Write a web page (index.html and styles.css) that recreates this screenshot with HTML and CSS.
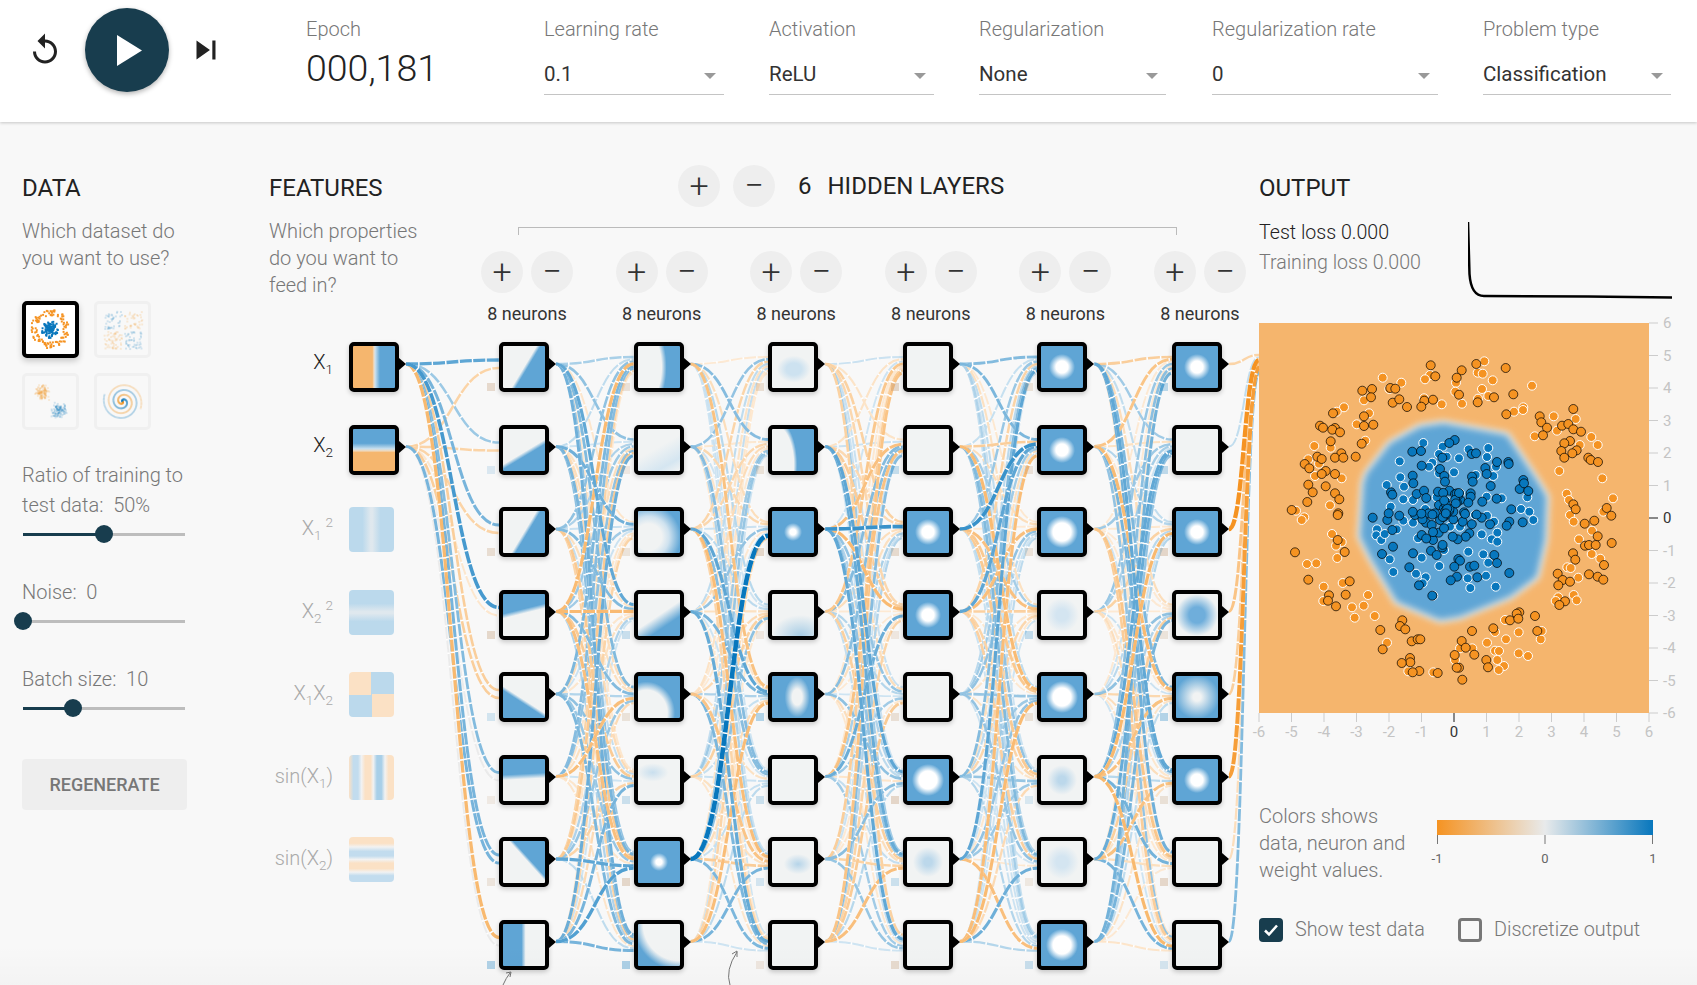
FILE: index.html
```html
<!DOCTYPE html>
<html lang="en">
<head>
    <meta charset="UTF-8">
    <meta name="viewport" content="width=device-width, initial-scale=1.0">
    <title>Tensorflow Playground</title>
    <link rel="stylesheet" href="styles.css">
</head>
<body>
    <svg id="links" class="links" width="1697" height="985"></svg>

    <header class="top">
        <svg class="icon-reset" width="36" height="36" viewBox="0 0 24 24"><path d="M12 5V1L7 6l5 5V7c3.31 0 6 2.69 6 6s-2.69 6-6 6-6-2.69-6-6H4c0 4.42 3.58 8 8 8s8-3.58 8-8-3.58-8-8-8z"/></svg>
        <div class="play"><svg width="25" height="31" viewBox="0 0 25 31"><polygon points="0,0 25,15.5 0,31"/></svg></div>
        <svg class="icon-next" width="38" height="38" viewBox="0 0 24 24"><path d="M6 18l8.5-6L6 6v12zM16 6v12h2V6h-2z"/></svg>
        <div class="epoch">
            <div class="label">Epoch</div>
            <div class="epoch-num">000,181</div>
        </div>
        <div class="drop w-rate"><div class="label">Learning rate</div><div class="select">0.1</div></div>
        <div class="drop w-act"><div class="label">Activation</div><div class="select">ReLU</div></div>
        <div class="drop w-reg"><div class="label">Regularization</div><div class="select">None</div></div>
        <div class="drop w-regrate"><div class="label">Regularization rate</div><div class="select">0</div></div>
        <div class="drop w-type"><div class="label">Problem type</div><div class="select">Classification</div></div>
    </header>

    <main class="main">
        <section class="col-data">
            <h4>DATA</h4>
            <p class="hint">Which dataset do you want to use?</p>
            <div class="thumbs">
                <svg id="set-circle" class="thumb selected" viewBox="0 0 51 51"></svg>
                <svg id="set-xor" class="thumb" viewBox="0 0 51 51"></svg>
                <svg id="set-gauss" class="thumb" viewBox="0 0 51 51"></svg>
                <svg id="set-spiral" class="thumb" viewBox="0 0 51 51"></svg>
            </div>
            <div class="slider-label first">Ratio of training to test data:&nbsp; 50%</div>
            <div class="slider"><div class="fill" style="width: 50%"></div></div>
            <div class="slider-label">Noise:&nbsp; 0</div>
            <div class="slider"><div class="fill" style="width: 0"></div></div>
            <div class="slider-label">Batch size:&nbsp; 10</div>
            <div class="slider"><div class="fill" style="width: 31%"></div></div>
            <button class="regen">REGENERATE</button>
        </section>

        <section class="col-features">
            <h4>FEATURES</h4>
            <p class="hint features-hint">Which properties do you want to feed in?</p>
            <div class="feature active"><span class="feat-name">X<sub>1</sub></span><div class="node f-x1"><i class="arrow"></i></div></div>
            <div class="feature active"><span class="feat-name">X<sub>2</sub></span><div class="node f-x2"><i class="arrow"></i></div></div>
            <div class="feature"><span class="feat-name">X<sub>1</sub><sup>2</sup></span><div class="swatch f-x1sq"></div></div>
            <div class="feature"><span class="feat-name">X<sub>2</sub><sup>2</sup></span><div class="swatch f-x2sq"></div></div>
            <div class="feature"><span class="feat-name">X<sub>1</sub>X<sub>2</sub></span><div class="swatch f-xy"></div></div>
            <div class="feature"><span class="feat-name">sin(X<sub>1</sub>)</span><div class="swatch f-sin1"></div></div>
            <div class="feature"><span class="feat-name">sin(X<sub>2</sub>)</span><div class="swatch f-sin2"></div></div>
        </section>

        <section class="col-net">
            <div class="layers-head">
                <div class="round">+</div>
                <div class="round">&minus;</div>
                <span class="layer-count">6</span>
                <span class="layer-title">HIDDEN LAYERS</span>
            </div>
            <div class="bracket"></div>
            <div id="layers" class="layers"></div>
        </section>

        <section class="col-output">
            <h4>OUTPUT</h4>
            <div class="loss-row">
                <div class="loss">
                    <div class="loss-test">Test loss 0.000</div>
                    <div class="loss-train">Training loss 0.000</div>
                </div>
                <svg class="spark" width="204" height="80"><path d="M0 0 L1.5 52 Q3 74 16 74 L120 74.5 L204 75.5"/></svg>
            </div>
            <svg id="plot" class="plot" width="413" height="422"></svg>
            <div class="legend">
                <p class="hint legend-text">Colors shows data, neuron and weight values.</p>
                <svg class="scale" width="230" height="50">
                    <defs>
                        <linearGradient id="scale-grad">
                            <stop offset="0" stop-color="#f59322"/>
                            <stop offset="0.5" stop-color="#e8eaeb"/>
                            <stop offset="1" stop-color="#0877bd"/>
                        </linearGradient>
                    </defs>
                    <rect width="216" height="15" fill="url(#scale-grad)"/>
                    <path class="scale-tick" d="M.5 15v9M108 15v9M215.5 15v9"/>
                    <text x="0" y="43" text-anchor="middle">-1</text>
                    <text x="108" y="43" text-anchor="middle">0</text>
                    <text x="216" y="43" text-anchor="middle">1</text>
                </svg>
            </div>
            <div class="checks">
                <label class="check first-check"><span class="box on"><svg width="18" height="18" viewBox="0 0 18 18"><path d="M3 9.5l4 4 8-9"/></svg></span>Show test data</label>
                <label class="check"><span class="box"></span>Discretize output</label>
            </div>
        </section>
    </main>

    <script src="app.js"></script>
</body>
</html>
```

FILE: styles.css
```css
*{
    margin: 0;
    padding: 0;
    box-sizing: border-box;
}
html,body{
    height: 985px;
    overflow: hidden;
}
body{
    position: relative;
    background: #f8f8f8;
    font-family: Roboto, "Liberation Sans", sans-serif;
    font-weight: 300;
    font-size: 20px;
    color: #777;
}
body::after{
    content: "";
    position: absolute;
    left: 0;
    right: 0;
    bottom: 0;
    height: 40px;
    background: linear-gradient(to bottom, rgba(0,0,0,0), rgba(0,0,0,.02));
    pointer-events: none;
}
.links{
    position: absolute;
    left: 0;
    top: 0;
}
.links .arrow-hint{
    fill: none;
    stroke: #777;
    stroke-width: 1;
}

/* top bar */
.top{
    position: relative;
    display: flex;
    align-items: flex-start;
    height: 122px;
    padding-left: 27px;
    background: #fff;
    box-shadow: 0 1px 3px rgba(0,0,0,.2);
}
.icon-reset{
    margin-top: 32px;
    fill: #222;
}
.play{
    display: flex;
    align-items: center;
    justify-content: center;
    width: 84px;
    height: 84px;
    margin: 8px 18px 0 22px;
    border-radius: 50%;
    background: #183d4e;
    box-shadow: 0 2px 5px rgba(0,0,0,.3);
}
.play svg{
    margin-left: 4px;
    fill: #fff;
}
.icon-next{
    fill: #222;
    margin: 31px 81px 0 0;
}
.epoch{
    width: 238px;
}
.label{
    height: 20px;
    margin-top: 19px;
    line-height: 20px;
    font-size: 20px;
    color: #777;
}
.epoch-num{
    margin-top: 8px;
    line-height: 42px;
    font-size: 37.5px;
    color: #222;
}
.drop{
    margin-right: 45px;
}
.w-rate{ width: 180px; }
.w-act{ width: 165px; }
.w-reg{ width: 187px; margin-right: 46px; }
.w-regrate{ width: 226px; }
.w-type{ width: 188px; margin-right: 0; }
.select{
    position: relative;
    height: 37px;
    margin-top: 19px;
    padding-top: 5px;
    line-height: 22px;
    font-size: 20.5px;
    font-weight: 400;
    color: #333;
    border-bottom: 1px solid #c4c4c4;
}
.select::after{
    content: "";
    position: absolute;
    right: 8px;
    top: 15px;
    border-left: 6px solid transparent;
    border-right: 6px solid transparent;
    border-top: 6px solid #999;
}

/* page columns */
.main{
    display: flex;
    align-items: flex-start;
    padding: 52px 0 0 22px;
}
h4{
    height: 28px;
    line-height: 28px;
    font-size: 24px;
    font-weight: 400;
    color: #222;
}
.hint{
    margin-top: 16px;
    line-height: 27px;
    font-size: 20px;
    color: #777;
}
.col-data{
    width: 247px;
    flex: none;
}
.col-data .hint{
    width: 165px;
}
.thumbs{
    display: grid;
    grid-template-columns: 57px 57px;
    gap: 15px;
    margin-top: 29px;
}
.thumb{
    width: 57px;
    height: 57px;
    padding: 3px;
    border: 3px solid #f0f0f0;
    border-radius: 5px;
    background: #f8f8f8;
}
.thumb rect{
    opacity: .16;
}
.thumb.selected{
    border: 4px solid #000;
    padding: 2px;
    background: #fff;
    box-shadow: 0 3px 6px rgba(0,0,0,.2);
}
.thumb.selected rect{
    opacity: 1;
}
.slider-label{
    width: 170px;
    margin-top: 41.5px;
    line-height: 30px;
    font-size: 20px;
}
.slider-label.first{
    margin-top: 30px;
}
.slider{
    position: relative;
    width: 162px;
    height: 3px;
    margin: 12.5px 0 0 1px;
    background: #bdbdbd;
}
.fill{
    position: relative;
    height: 3px;
    background: #183d4e;
}
.fill::after{
    content: "";
    position: absolute;
    right: -9px;
    top: -7.5px;
    width: 18px;
    height: 18px;
    border-radius: 50%;
    background: #183d4e;
}
.regen{
    display: block;
    width: 165px;
    height: 51px;
    margin-top: 49.5px;
    border: 0;
    border-radius: 4px;
    background: #eee;
    color: #777;
    font-family: Roboto, "Liberation Sans", sans-serif;
    font-size: 18px;
    font-weight: 500;
}

.col-features{
    position: relative;
    width: 212px;
    flex: none;
}
.features-hint{
    width: 160px;
}
.feature{
    display: flex;
    align-items: flex-start;
    height: 82.5px;
}
.features-hint + .feature{
    margin-top: 43px;
}
.feat-name{
    width: 64px;
    margin-right: 16px;
    padding-top: 9px;
    text-align: right;
    white-space: nowrap;
    font-size: 20px;
    color: #aaa;
}
.feature.active .feat-name{
    padding-top: 8px;
    color: #222;
}
.feat-name sub,.feat-name sup{
    font-size: 13.5px;
    line-height: 0;
}
.feat-name sup{
    margin-left: 4px;
}
.swatch{
    width: 45px;
    height: 45px;
    border-radius: 4px;
}
.f-x1{ background: linear-gradient(90deg, #f5b66e 46%, #eedcc6 50%, #c8dfee 53%, #5fa5d5 64%); }
.f-x2{ background: linear-gradient(0deg, #f5b66e 44%, #f0d9bc 48%, #c8dfee 53%, #5fa5d5 66%); }
.f-x1sq{ background: linear-gradient(90deg, #bbd9ec 30%, #dfe8ee 48%, #dfe8ee 52%, #bbd9ec 70%); }
.f-x2sq{ background: linear-gradient(0deg, #bbd9ec 30%, #dfe8ee 48%, #dfe8ee 52%, #bbd9ec 70%); }
.f-xy{ background: conic-gradient(#bbd9ec 0 25%, #fbe1c5 0 50%, #bbd9ec 0 75%, #fbe1c5 0); }
.f-sin1{ background: linear-gradient(90deg, #fbe1c5 0, #c2dcee 10%, #c2dcee 20%, #f2f2f2 28%, #fbe1c5 36%, #fbe1c5 48%, #f2f2f2 54%, #a8cfe8 62%, #a8cfe8 72%, #f2f2f2 80%, #fbe1c5 88%, #fbe1c5 100%); }
.f-sin2{ background: linear-gradient(180deg, #fbe1c5 0, #fbe1c5 14%, #f2f2f2 22%, #c2dcee 32%, #c2dcee 42%, #f2f2f2 50%, #fbe1c5 58%, #fbe1c5 70%, #f2f2f2 78%, #c2dcee 86%, #c2dcee 100%); }

/* network */
.col-net{
    width: 778px;
    flex: none;
    margin-top: -9px;
}
.layers-head{
    display: flex;
    align-items: center;
    gap: 13px;
    padding-left: 197px;
    font-size: 24px;
    font-weight: 400;
    color: #222;
}
.round{
    width: 42px;
    height: 42px;
    border-radius: 50%;
    background: #eee;
    text-align: center;
    line-height: 41px;
    font-size: 34px;
    font-weight: 300;
    color: #333;
}
.layer-count{
    margin: 0 3px 0 10px;
}
.bracket{
    width: 659px;
    height: 8px;
    margin: 20px 0 0 37px;
    border: 1.5px solid #bbb;
    border-bottom: 0;
}
.layers{
    display: flex;
    margin-top: 16px;
}
.layer{
    position: relative;
    width: 134.6px;
    flex: none;
}
.layer:last-child{
    width: 105px;
}
.layer-btns{
    display: flex;
    gap: 8px;
}
.neurons{
    width: 92px;
    margin-top: 8px;
    line-height: 26px;
    text-align: center;
    white-space: nowrap;
    font-size: 18px;
    font-weight: 400;
    color: #333;
}
.stack{
    display: flex;
    flex-direction: column;
    gap: 32.5px;
    margin: 15px 0 0 18px;
}
.node{
    position: relative;
    flex: none;
    width: 50px;
    height: 50px;
    border: 4px solid #000;
    border-radius: 5px;
    background-color: #f1f3f3;
    box-shadow: 0 2px 5px rgba(0,0,0,.2);
}
.arrow{
    position: absolute;
    left: 46px;
    top: 12px;
    border-top: 6px solid transparent;
    border-bottom: 6px solid transparent;
    border-left: 7px solid #000;
}
.bias{
    position: absolute;
    left: -16px;
    top: 37px;
    width: 8px;
    height: 8px;
}
.d-a{ background-image: linear-gradient(121deg, #f1f3f3 50%, #5fa5d5 56%); }
.d-b{ background-image: linear-gradient(149deg, #f1f3f3 53%, #5fa5d5 60%); }
.d-c{ background-image: linear-gradient(346deg, #f1f3f3 53%, #5fa5d5 62%); }
.d-d{ background-image: linear-gradient(213deg, #f1f3f3 54%, #5fa5d5 60%); }
.d-e{ background-image: linear-gradient(357deg, #f1f3f3 52%, #5fa5d5 64%); }
.d-f{ background-image: linear-gradient(48deg, #f1f3f3 55%, #5fa5d5 60%); }
.d-g{ background-image: linear-gradient(90deg, #5fa5d5 44%, #f1f3f3 54%); }
.c-a{ background-image: radial-gradient(ellipse 60% 115% at 8% 50%, #f1f3f3 80%, #5fa5d5 100%); }
.c-b{ background-image: linear-gradient(150deg, #f1f3f3 45%, #d5e6f1 80%, #f1f3f3 100%); }
.c-c{ background-image: radial-gradient(ellipse 70% 70% at 25% 62%, #f1f3f3 45%, #cfe2ef 70%, #5fa5d5 110%); }
.c-d{ background-image: linear-gradient(146deg, #f1f3f3 50%, #5fa5d5 72%); }
.c-e{ background-image: radial-gradient(ellipse 62% 68% at 20% 88%, #f1f3f3 80%, #5fa5d5 110%); }
.c-f{ background-image: radial-gradient(ellipse 38% 22% at 35% 32%, #c9dfee, #f1f3f3); }
.c-g{ background-image: radial-gradient(circle at 100% 0, #f1f3f3 62%, #5fa5d5 78%); }
.e-a{ background-image: radial-gradient(ellipse 40% 32% at 52% 55%, #cde2f0 45%, #f1f3f3 100%); }
.e-b{ background-image: radial-gradient(ellipse 52% 110% at 8% 85%, #f1f3f3 84%, #5fa5d5 100%); }
.e-c{ background-image: radial-gradient(ellipse 70% 50% at 68% 100%, #a6cce5, #f1f3f3); }
.e-d{ background-image: radial-gradient(ellipse 26% 42% at 60% 50%, #f1f3f3 45%, #5fa5d5 115%); }
.e-e{ background-image: radial-gradient(ellipse 34% 24% at 62% 55%, #b5d4e9, #f1f3f3); }
.hole-s{ background-image: radial-gradient(circle, #fff 3px, #5fa5d5 9px); }
.hole-m{ background-image: radial-gradient(circle, #fff 6px, #5fa5d5 13px); }
.hole-l{ background-image: radial-gradient(circle, #fff 9px, #5fa5d5 16px); }
.hole-xl{ background-image: radial-gradient(circle, #f1f3f3 4px, #5fa5d5 22px); }
.blob-f{ background-image: radial-gradient(circle, #d4e5f1 6px, #f1f3f3 17px); }
.blob-m{ background-image: radial-gradient(circle, #bcd8eb 4px, #f1f3f3 15px); }
.blob-s{ background-image: radial-gradient(circle, #6faedb 8px, #f1f3f3 21px); }

/* output */
.col-output{
    width: 413px;
    flex: none;
}
.loss-row{
    display: flex;
    height: 80px;
    margin: 16px 0 25px;
}
.loss{
    width: 209px;
    line-height: 30px;
    font-size: 19.6px;
}
.loss-test{
    color: #222;
}
.spark{
    margin-top: 4px;
    flex: none;
}
.spark path{
    fill: none;
    stroke: #000;
    stroke-width: 2.5;
}
.plot{
    display: block;
    overflow: visible;
}
.plot text{
    font-size: 15px;
    font-weight: 400;
    fill: #c4c4c4;
}
.plot text.zero{
    fill: #333;
}
.plot .tick{
    stroke: #ccc;
    stroke-width: 1;
}
.plot .tick.zero{
    stroke: #888;
    stroke-width: 2;
}
.legend{
    display: flex;
    height: 80px;
    margin-top: 58px;
}
.legend-text{
    width: 178px;
    margin: 0;
    padding-right: 22px;
}
.scale{
    margin-top: 17px;
    overflow: visible;
}
.scale text{
    font-size: 13px;
    font-weight: 400;
    fill: #666;
}
.scale-tick{
    fill: none;
    stroke: #777;
    stroke-width: 1;
}
.checks{
    display: flex;
    margin-top: 35px;
}
.check{
    display: flex;
    align-items: center;
    gap: 12px;
    font-size: 19.8px;
    line-height: 24px;
    color: #777;
}
.first-check{
    width: 199px;
}
.box{
    display: flex;
    align-items: center;
    justify-content: center;
    width: 24px;
    height: 24px;
    border: 3px solid #777;
    border-radius: 4px;
}
.box.on{
    border: 0;
    background: #183d4e;
}
.box path{
    fill: none;
    stroke: #fff;
    stroke-width: 2.5;
}
```

FILE: app.js
```js
// seeded so every render draws the same network
var seed = 181;
function rnd(){
    seed = (seed * 16807) % 2147483647;
    return seed / 2147483647;
}

var BLUE = "#0877bd";
var ORANGE = "#f59322";
var COL_X = [499, 633.6, 768.2, 902.8, 1037.4, 1172];
var ROW_Y = [342, 424.5, 507, 589.5, 672, 754.5, 837, 919.5];

// heatmap class of every neuron, layer by layer
var NODES = [
    ["d-a","d-b","d-a","d-c","d-d","d-e","d-f","d-g"],
    ["c-a","c-b","c-c","c-d","c-e","c-f","hole-s","c-g"],
    ["e-a","e-b","hole-s","e-c","e-d","","e-e",""],
    ["","","hole-m","hole-m","","hole-l","blob-m",""],
    ["hole-m","hole-m","hole-l","blob-f","hole-l","blob-m","blob-f","hole-l"],
    ["hole-m","","hole-m","blob-s","hole-xl","hole-m","",""]
];

function drawLayers(){
    var html = "";
    for(var c = 0; c < NODES.length; c++){
        html += "<div class='layer'><div class='layer-btns'><div class='round'>+</div><div class='round'>&minus;</div></div>";
        html += "<div class='neurons'>8 neurons</div><div class='stack'>";
        for(var r = 0; r < 8; r++){
            var v = rnd();
            var col = v < 0.6 ? "rgba(190,150,110," + (0.15 + rnd() * 0.2) + ")" : "rgba(8,119,189," + (0.12 + rnd() * 0.2) + ")";
            html += "<div class='node " + NODES[c][r] + "'><i class='arrow'></i><i class='bias' style='background:" + col + "'></i></div>";
        }
        html += "</div></div>";
    }
    document.getElementById("layers").innerHTML = html;
}

// [strength, -1 orange / 1 blue]
var INPUT_W = [
    [[.55,1],[.3,1],[.45,1],[.65,1],[.35,-1],[.4,1],[.45,1],[.55,-1]],
    [[.3,-1],[.3,-1],[.3,-1],[.12,-1],[.35,-1],[.1,0],[.45,1],[.1,0]]
];
var FIXED = {
    "0-6-6": [.55,1], "0-7-6": [.6,1], "0-7-7": [.45,1],
    "1-6-2": [1,1], "1-7-2": [.3,-1],
    "2-2-2": [.7,1], "2-7-7": [.1,1], "2-3-1": [.4,1],
    "3-2-1": [.7,1], "3-3-1": [.55,1], "3-1-1": [.35,-1], "3-0-0": [.4,1],
    "4-7-3": [.45,1], "4-0-0": [.35,-1]
};
var OUTPUT_W = [[.3,-1],[.15,1],[.9,-1],[.45,-1],[.35,-1],[.8,-1],[.2,-1],[.4,1]];

function drawLinks(){
    var items = [];
    function add(x1, y1, x2, y2, w){
        var mx = (x1 + x2) / 2;
        items.push({
            d: "M" + x1 + " " + y1 + "C" + mx + " " + y1 + " " + mx + " " + y2 + " " + x2 + " " + y2,
            s: w[0],
            c: w[1] > 0 ? BLUE : (w[1] < 0 ? ORANGE : "#999")
        });
    }
    for(var i = 0; i < 2; i++){
        for(var d = 0; d < 8; d++){
            add(406, ROW_Y[i] + 22, 499, ROW_Y[d] + 18 + i * 8, INPUT_W[i][d]);
        }
    }
    for(var c = 0; c < 5; c++){
        for(var s = 0; s < 8; s++){
            for(var d = 0; d < 8; d++){
                var key = c + "-" + s + "-" + d;
                var v = rnd();
                var w = FIXED[key] || [0.1 + v * v * 0.45, rnd() < 0.52 ? 1 : -1];
                add(COL_X[c] + 57, ROW_Y[s] + 22, COL_X[c + 1], ROW_Y[d] + 15 + s * 2.3, w);
            }
        }
    }
    for(var s = 0; s < 8; s++){
        add(1229, ROW_Y[s] + 22, 1259, 355 + s * 2.5, OUTPUT_W[s]);
    }
    items.sort(function(a, b){ return a.s - b.s; });

    var html = "";
    for(var n = 0; n < items.length; n++){
        var it = items[n];
        var width = (1.6 + it.s * 3).toFixed(1);
        html += "<path d='" + it.d + "' fill='none' stroke='#fff' stroke-width='" + width + "'/>";
        html += "<path d='" + it.d + "' fill='none' stroke='" + it.c + "' stroke-opacity='" + Math.min(1, it.s + 0.1).toFixed(2) + "' stroke-width='" + width + "' stroke-dasharray='12 1.5'/>";
    }
    html += "<path class='arrow-hint' d='M503 985Q506 978 510 973M506 973L511 972L510 977'/>";
    html += "<path class='arrow-hint' d='M730 985Q725 970 737 952M732 954L737 951L737 957'/>";
    document.getElementById("links").innerHTML = html;
}

// dot positions read off the reference, as 3x offsets in two bands
var TOP_OR_TEST = [[572,616],[586,649],[665,631],[650,653],[709,612],[797,624],[367,692],[396,687],[393,712],[451,684],[466,686],[458,728],[478,718],[501,741],[553,722],[579,719],[544,740],[657,704],[713,727],[762,712],[820,703],[799,763],[899,769],[904,787],[921,803],[909,826],[966,797],[985,792],[1000,747],[1000,808],[1023,815],[990,843],[973,850],[964,873],[1010,871],[997,880],[973,893],[1045,893],[1052,900],[1074,906],[279,760],[372,769],[372,798],[400,794],[240,797],[249,803],[285,804],[277,809],[300,817],[272,844],[365,851],[304,880],[285,893],[310,893],[347,890],[194,912],[208,925],[232,890],[245,897],[257,933],[245,942],[285,942]];
var TOP_OR_TRAIN = [[733,604],[570,645],[555,658],[484,668],[428,653],[648,668],[646,695],[713,638],[728,641],[758,661],[726,687],[745,708],[714,716],[666,731],[605,733],[552,715],[876,677],[850,742],[822,755],[849,750],[941,769],[1007,777],[951,812],[884,829],[1054,831],[1073,855],[1019,855],[958,933],[1087,955],[448,687],[372,721],[312,742],[290,755],[387,760],[350,793],[376,842],[223,858],[272,863],[205,898],[237,911],[225,948],[305,955]];
var TOP_BL_TEST = [[644,840],[628,849],[517,875],[543,873],[695,882],[708,880],[771,906],[805,906],[806,912],[545,917],[600,927],[613,948],[736,924],[740,942],[518,947],[607,893],[850,960],[696,950]];
var TOP_BL_TRAIN = [[550,849],[608,860],[745,864],[686,868],[597,882],[620,890],[657,895],[741,891],[479,904],[577,908],[567,920],[642,937],[481,952],[597,940],[707,945],[760,948],[768,920]];
var LOW_OR_TEST = [[205,14],[257,19],[218,37],[285,40],[298,58],[202,66],[155,90],[295,100],[293,105],[293,180],[165,217],[314,216],[205,299],[329,304],[267,346],[317,344],[264,362],[288,379],[1000,73],[1007,88],[1100,84],[1114,107],[1063,122],[1034,131],[1073,169],[1115,189],[1035,197],[1047,195],[1067,195],[999,220],[1006,239],[1092,255],[953,281],[968,300],[990,305],[1047,283],[1073,290],[1090,299],[955,316],[975,364],[958,375],[487,421],[480,438],[496,448],[421,450],[515,484],[533,478],[541,478],[428,508],[510,534],[511,547],[485,549],[538,573],[518,577],[593,579],[696,453],[760,445],[885,408],[838,397],[830,401],[810,421],[835,416],[892,453],[665,483],[677,503],[703,524],[644,525],[657,563],[650,563],[667,599],[739,540],[744,562]];
var LOW_OR_TRAIN = [[980,41],[987,60],[990,105],[1001,125],[1119,55],[1090,95],[1056,152],[1017,178],[1055,222],[1081,236],[982,262],[992,264],[1015,293],[1001,345],[1010,361],[955,352],[947,363],[168,92],[193,112],[185,120],[270,76],[276,162],[305,186],[288,197],[292,234],[201,252],[229,250],[251,320],[308,309],[250,363],[384,345],[336,382],[371,377],[344,413],[404,408],[441,488],[505,574],[580,577],[795,420],[765,456],[836,457],[798,478],[741,488],[902,478],[905,453],[697,505],[660,505],[645,540],[765,512],[777,513],[836,520],[864,528],[772,540],[792,558],[776,570]];
var LOW_BL_TEST = [[398,113],[442,120],[446,100],[478,107],[525,105],[457,150],[459,200],[426,222],[519,220],[508,262],[537,316],[577,347],[453,37],[457,44],[530,42],[552,32],[597,75],[594,35],[628,32],[645,42],[661,60],[692,40],[692,50],[685,68],[727,65],[770,56],[839,27],[852,10],[865,33],[814,88],[808,125],[848,127],[800,137],[750,133],[725,113],[688,160],[677,170],[653,178],[638,170],[596,158],[545,165],[579,180],[573,212],[590,225],[607,202],[655,237],[660,242],[643,260],[690,260],[703,257],[763,225],[771,249],[808,279],[712,292],[651,290],[632,301],[558,128],[575,135],[600,120],[612,110],[640,118],[668,125],[672,97],[640,95],[612,145],[585,100],[566,100],[752,18],[698,5],[615,5],[520,10]];
var LOW_BL_TRAIN = [[411,148],[409,166],[424,180],[434,162],[470,148],[452,80],[490,58],[440,15],[492,20],[519,60],[556,87],[590,52],[620,65],[660,40],[740,50],[785,55],[843,87],[868,95],[880,120],[772,158],[755,178],[772,185],[725,163],[741,107],[762,125],[660,140],[630,140],[534,175],[612,210],[685,215],[730,223],[745,248],[738,287],[683,295],[691,324],[767,320],[598,258],[545,233],[449,238],[460,276],[528,281],[557,292],[548,310],[580,347],[519,128],[490,122],[705,105],[862,52]];
var BLOB_TOP = [[540,800],[610,790],[800,825],[890,960]];
var BLOB_LOW = [[920,50],[915,180],[890,290],[810,350],[660,410],[600,420],[470,365],[395,240],[360,170],[370,10]];
var BLOB_TOP2 = [[380,940],[450,850]];

function px(p, low){
    return [(p[0] - 57) / 3, (low ? p[1] + 471 : p[1] - 489) / 3];
}
function dots(list, low, fill, stroke, op){
    var html = "";
    for(var i = 0; i < list.length; i++){
        var p = px(list[i], low);
        html += "<circle cx='" + p[0].toFixed(1) + "' cy='" + p[1].toFixed(1) + "' r='4.5' fill='" + fill + "' stroke='" + stroke + "' stroke-opacity='" + op + "'/>";
    }
    return html;
}

function drawPlot(){
    var pts = [];
    BLOB_TOP.forEach(function(p){ pts.push(px(p, false).join(",")); });
    BLOB_LOW.forEach(function(p){ pts.push(px(p, true).join(",")); });
    BLOB_TOP2.forEach(function(p){ pts.push(px(p, false).join(",")); });
    var poly = pts.join(" ");

    var html = "<defs><filter id='soft' x='-10%' y='-10%' width='120%' height='120%'><feGaussianBlur stdDeviation='3.5'/></filter>";
    html += "<clipPath id='plot-clip'><rect width='390' height='390'/></clipPath></defs>";
    html += "<rect width='390' height='390' fill='#f5b56d'/>";
    html += "<polygon points='" + poly + "' fill='#f6efe6' stroke='#f6efe6' stroke-width='6' filter='url(#soft)'/>";
    html += "<polygon points='" + poly + "' fill='#5fa5d5' filter='url(#soft)'/>";

    html += "<g clip-path='url(#plot-clip)'>";
    html += dots(TOP_OR_TRAIN, false, ORANGE, "#fff", 1) + dots(LOW_OR_TRAIN, true, ORANGE, "#fff", 1);
    html += dots(TOP_BL_TRAIN, false, BLUE, "#fff", 1) + dots(LOW_BL_TRAIN, true, BLUE, "#fff", 1);
    html += dots(TOP_OR_TEST, false, ORANGE, "#000", .7) + dots(LOW_OR_TEST, true, ORANGE, "#000", .7);
    html += dots(TOP_BL_TEST, false, BLUE, "#000", .7) + dots(LOW_BL_TEST, true, BLUE, "#000", .7);
    // the crowded middle of the cluster
    var extra = [];
    for(var i = 0; i < 30; i++){
        var a = rnd() * 6.283, r = rnd() * 110;
        extra.push([620 + Math.cos(a) * r, 100 + Math.sin(a) * r]);
    }
    html += dots(extra, true, BLUE, "#000", .7);
    html += "</g>";

    for(var v = -6; v <= 6; v++){
        var y = 195 - v * 32.5;
        var x = 195 + v * 32.5;
        var z = v === 0 ? " zero" : "";
        html += "<line class='tick" + z + "' x1='390' x2='399' y1='" + y + "' y2='" + y + "'/>";
        html += "<text class='" + z + "' x='404' y='" + (y + 5) + "'>" + v + "</text>";
        html += "<line class='tick" + z + "' y1='390' y2='399' x1='" + x + "' x2='" + x + "'/>";
        html += "<text class='" + z + "' x='" + x + "' y='414' text-anchor='middle'>" + v + "</text>";
    }
    document.getElementById("plot").innerHTML = html;
}

function thumbDots(id, list, size){
    var html = "";
    for(var i = 0; i < list.length; i++){
        html += "<rect x='" + list[i][0].toFixed(1) + "' y='" + list[i][1].toFixed(1) + "' width='" + size + "' height='" + size + "' fill='" + list[i][2] + "'/>";
    }
    document.getElementById(id).innerHTML = html;
}

function drawThumbs(){
    var list = [];
    for(var i = 0; i < 110; i++){
        var a = rnd() * 6.283;
        var r = rnd() * 10;
        list.push([24 + Math.cos(a) * r, 24 + Math.sin(a) * r, BLUE]);
        r = 15 + rnd() * 7;
        list.push([24 + Math.cos(a + 1) * r, 24 + Math.sin(a + 1) * r, ORANGE]);
    }
    thumbDots("set-circle", list, 2.2);

    list = [];
    for(var i = 0; i < 180; i++){
        var x = rnd() * 20, y = rnd() * 20;
        var qx = rnd() < .5, qy = rnd() < .5;
        list.push([4 + x + (qx ? 0 : 23), 4 + y + (qy ? 0 : 23), qx === qy ? BLUE : ORANGE]);
    }
    thumbDots("set-xor", list, 2.2);

    list = [];
    for(var i = 0; i < 110; i++){
        list.push([15 + (rnd() + rnd() - 1) * 9, 15 + (rnd() + rnd() - 1) * 10, ORANGE]);
        list.push([34 + (rnd() + rnd() - 1) * 10, 35 + (rnd() + rnd() - 1) * 10, BLUE]);
    }
    thumbDots("set-gauss", list, 2.2);

    list = [];
    for(var i = 0; i < 170; i++){
        var t = i / 170;
        var r = t * 22;
        var a = t * 12.6 + 0.4;
        list.push([24.5 + Math.cos(a) * r, 24.5 + Math.sin(a) * r, ORANGE]);
        list.push([24.5 - Math.cos(a) * r, 24.5 - Math.sin(a) * r, BLUE]);
    }
    thumbDots("set-spiral", list, 2.2);
}

drawLayers();
drawLinks();
drawPlot();
drawThumbs();
```
